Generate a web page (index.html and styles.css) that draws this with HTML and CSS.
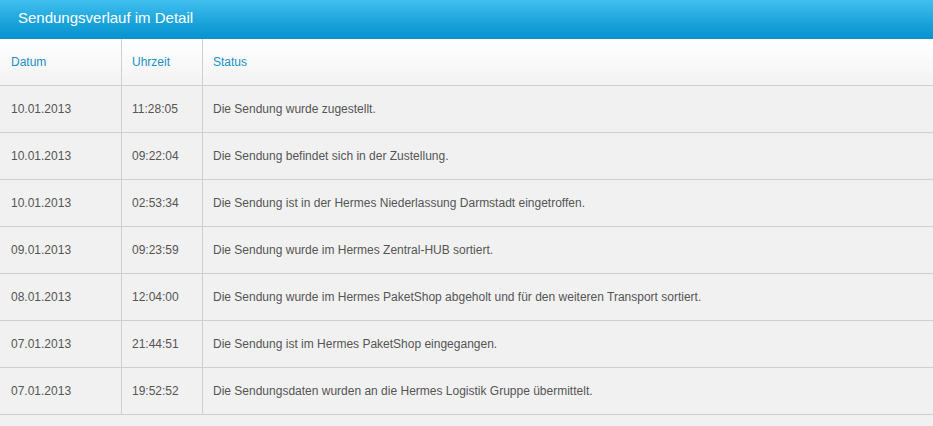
FILE: index.html
```html
<!DOCTYPE html>
<html lang="de">
<head>
<meta charset="utf-8">
<link rel="stylesheet" href="styles.css">
</head>
<body>
<div class="panel">
  <div class="panel-title">Sendungsverlauf im Detail</div>
  <table class="history">
    <thead>
      <tr><th class="c-date">Datum</th><th class="c-time">Uhrzeit</th><th class="c-status">Status</th></tr>
    </thead>
    <tbody>
      <tr><td>10.01.2013</td><td>11:28:05</td><td>Die Sendung wurde zugestellt.</td></tr>
      <tr><td>10.01.2013</td><td>09:22:04</td><td>Die Sendung befindet sich in der Zustellung.</td></tr>
      <tr><td>10.01.2013</td><td>02:53:34</td><td>Die Sendung ist in der Hermes Niederlassung Darmstadt eingetroffen.</td></tr>
      <tr><td>09.01.2013</td><td>09:23:59</td><td>Die Sendung wurde im Hermes Zentral-HUB sortiert.</td></tr>
      <tr><td>08.01.2013</td><td>12:04:00</td><td>Die Sendung wurde im Hermes PaketShop abgeholt und für den weiteren Transport sortiert.</td></tr>
      <tr><td>07.01.2013</td><td>21:44:51</td><td>Die Sendung ist im Hermes PaketShop eingegangen.</td></tr>
      <tr><td>07.01.2013</td><td>19:52:52</td><td>Die Sendungsdaten wurden an die Hermes Logistik Gruppe übermittelt.</td></tr>
    </tbody>
  </table>
</div>
</body>
</html>
```
FILE: styles.css
```css
html, body {
  margin: 0;
  padding: 0;
  background: #f1f1f1;
}
body {
  font-family: "Liberation Sans", Arial, sans-serif;
  font-size: 12px;
  color: #555;
}
.panel {
  width: 933px;
  min-height: 426px;
  background: #f1f1f1;
}
.panel-title {
  height: 39px;
  box-sizing: border-box;
  padding: 9px 0 0 18px;
  font-size: 15px;
  color: #fff;
  background: linear-gradient(to bottom, #41bfee 0%, #1fa7dd 50%, #0692cf 100%);
}
.history {
  width: 100%;
  border-collapse: collapse;
  table-layout: fixed;
}
.history th,
.history td {
  height: 46px;
  padding: 0 0 0 10px;
  text-align: left;
  vertical-align: middle;
  border-bottom: 1px solid #cdcfd2;
  border-left: 1px solid #cdcfd2;
  font-weight: normal;
  white-space: nowrap;
}
.history th:first-child,
.history td:first-child {
  border-left: none;
  padding-left: 11px;
}
.history thead th {
  color: #1a8fcc;
  background: linear-gradient(to bottom, #ffffff 0%, #f3f3f3 100%);
}
.history .c-date { width: 110px; }
.history .c-time { width: 70px; }
.history tbody td {
  background: #f1f1f1;
  color: #555;
}
```
